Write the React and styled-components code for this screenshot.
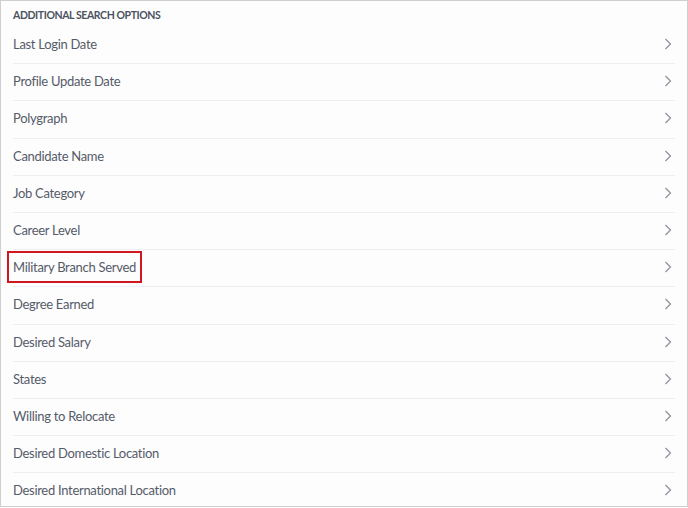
import React from "react";
import styled, { createGlobalStyle } from "styled-components";

const GlobalStyle = createGlobalStyle`
  html, body {
    margin: 0;
    padding: 0;
    background: #ffffff;
  }
  body {
    font-family: "Lato", "Liberation Sans", sans-serif;
  }
`;

const options = [
  "Last Login Date",
  "Profile Update Date",
  "Polygraph",
  "Candidate Name",
  "Job Category",
  "Career Level",
  "Military Branch Served",
  "Degree Earned",
  "Desired Salary",
  "States",
  "Willing to Relocate",
  "Desired Domestic Location",
  "Desired International Location",
];

const Panel = styled.div`
  width: 688px;
  height: 507px;
  box-sizing: border-box;
  border: 1px solid #cfcfcf;
  background: #fdfdfd;
  padding: 0 12px 0 12px;
  overflow: hidden;
`;

const Heading = styled.h3`
  margin: 0;
  padding: 8px 0 0 0;
  height: 26px;
  box-sizing: border-box;
  font-size: 10.5px;
  font-weight: 700;
  letter-spacing: -0.4px;
  color: #4b5260;
  text-transform: uppercase;
`;

const List = styled.ul`
  list-style: none;
  margin: 0;
  padding: 0;
`;

const Row = styled.li`
  display: flex;
  align-items: center;
  justify-content: space-between;
  height: 37.2px;
  padding-bottom: 2px;
  box-sizing: border-box;
  border-bottom: 1px solid ${(p) => (p.last ? "transparent" : "#eeeef2")};
  cursor: pointer;
`;

const Label = styled.span`
  font-size: 13px;
  letter-spacing: -0.3px;
  color: #555b69;
  padding: 6px 4px 6px 0;
  margin-left: ${(p) => (p.highlight ? "-6px" : "0")};
  padding-left: ${(p) => (p.highlight ? "4px" : "0")};
  border: solid ${(p) => (p.highlight ? "#d0161f" : "transparent")};
  border-width: ${(p) => (p.highlight ? "2px" : "0")};
`;

const Chevron = () => (
  <svg width="8" height="12" viewBox="0 0 8 12" style={{ marginRight: 3 }}>
    <path d="M1.5 1 L6.5 6 L1.5 11" fill="none" stroke="#8b909a" strokeWidth="1.2" />
  </svg>
);

export default function App() {
  return (
    <>
      <GlobalStyle />
      <Panel>
        <Heading>Additional Search Options</Heading>
        <List>
          {options.map((o, i) => (
            <Row key={o} last={i === options.length - 1 ? 1 : 0}>
              <Label highlight={o === "Military Branch Served" ? 1 : 0}>{o}</Label>
              <Chevron />
            </Row>
          ))}
        </List>
      </Panel>
    </>
  );
}
